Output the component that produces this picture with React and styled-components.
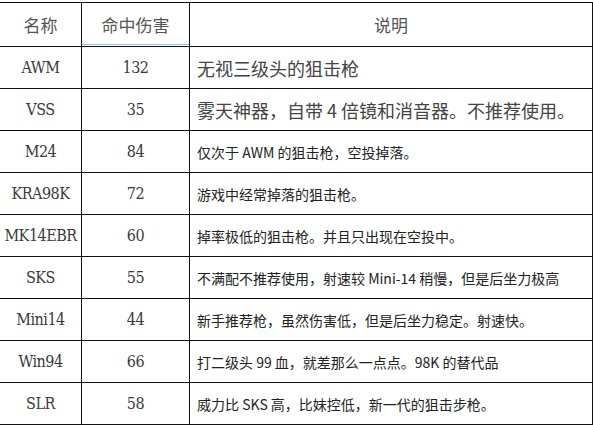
import React from 'react';
import styled, { createGlobalStyle } from 'styled-components';

const rows = [
  { name: 'AWM', damage: 132, note: '无视三级头的狙击枪', big: true },
  { name: 'VSS', damage: 35, note: '雾天神器，自带 4 倍镜和消音器。不推荐使用。', big: true },
  { name: 'M24', damage: 84, note: '仅次于 AWM 的狙击枪，空投掉落。' },
  { name: 'KRA98K', damage: 72, note: '游戏中经常掉落的狙击枪。' },
  { name: 'MK14EBR', damage: 60, note: '掉率极低的狙击枪。并且只出现在空投中。' },
  { name: 'SKS', damage: 55, note: '不满配不推荐使用，射速较 Mini-14 稍慢，但是后坐力极高' },
  { name: 'Mini14', damage: 44, note: '新手推荐枪，虽然伤害低，但是后坐力稳定。射速快。' },
  { name: 'Win94', damage: 66, note: '打二级头 99 血，就差那么一点点。98K 的替代品' },
  { name: 'SLR', damage: 58, note: '威力比 SKS 高，比妹控低，新一代的狙击步枪。' },
];

function App() {
  return (
    <>
      <GlobalStyle />
      <Page>
        <Table>
          <colgroup>
            <col style={{ width: 82 }} />
            <col style={{ width: 108 }} />
            <col />
          </colgroup>
          <thead>
            <tr>
              <HeadCell>名称</HeadCell>
              <HeadCell active>命中伤害</HeadCell>
              <HeadCell>说明</HeadCell>
            </tr>
          </thead>
          <tbody>
            {rows.map(row => (
              <Row key={row.name}>
                <CodeCell>{row.name}</CodeCell>
                <CodeCell>{row.damage}</CodeCell>
                <NoteCell big={row.big}>{row.note}</NoteCell>
              </Row>
            ))}
          </tbody>
        </Table>
      </Page>
    </>
  );
}
export default App;

const GlobalStyle = createGlobalStyle`
  html, body {
    margin: 0;
    background: #ffffff;
  }
`

const Page = styled.div`
  width: 593px;
  height: 428px;
  padding-top: 2px;
  box-sizing: border-box;
  overflow: hidden;
`

const Table = styled.table`
  border-collapse: collapse;
  table-layout: fixed;
  width: 594px;
  margin-left: -1px;
  color: #333;

  td, th {
    border: 1px solid #111;
    padding: 0;
  }
`

const HeadCell = styled.th`
  height: 43px;
  font-family: "Noto Sans CJK SC", sans-serif;
  font-weight: 400;
  font-size: 17px;
  text-align: center;
  color: #555;
  box-shadow: ${p => p.active ? 'inset 0 -1px 0 #fff, inset 0 -2px 0 #86cbe3' : 'none'};
`

const Row = styled.tr`
  height: 42px;
`

const CodeCell = styled.td`
  text-align: center;
  font-family: "DejaVu Serif Condensed", "DejaVu Serif", "Noto Sans CJK SC", serif;
  font-stretch: semi-condensed;
  font-size: 16px;
  letter-spacing: -0.5px;
  color: #3a3a3a;
`

const NoteCell = styled.td`
  padding: 0 0 0 7px !important;
  font-family: "Noto Sans CJK SC", sans-serif;
  font-size: ${p => p.big ? '18px' : '14px'};
  color: ${p => p.big ? '#444' : '#222'};
  white-space: nowrap;
  overflow: hidden;
`
